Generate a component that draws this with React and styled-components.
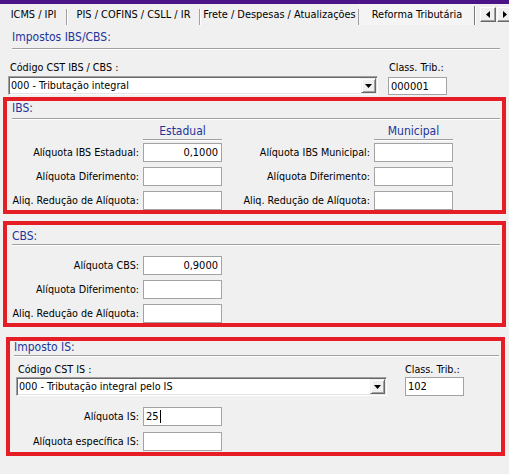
import React from "react";
import styled, { createGlobalStyle } from "styled-components";

const FONT = `"DejaVu Sans Condensed", "Liberation Sans", sans-serif`;
const BLUE = "#22349a";
const RED = "#e41e24";

const GlobalStyle = createGlobalStyle`
  html, body { margin: 0; padding: 0; background: #f0f0f0; }
  body { font-family: ${FONT}; font-size: 10.7px; color: #000; }
  * { box-sizing: border-box; }
`;

const Window = styled.div`
  width: 509px;
  height: 474px;
  overflow: hidden;
  display: flex;
  flex-direction: column;
  background: #f0f0f0;
  font-family: ${FONT};
  font-size: 10.7px;
  color: #000;
`;

const TitleStrip = styled.div`
  flex: none;
  height: 4px;
  background: #4b1487;
`;

const TabBar = styled.div`
  flex: none;
  height: 21px;
  display: flex;
  align-items: stretch;
`;

const Tab = styled.div`
  flex: none;
  width: ${(p) => p.$width}px;
  position: relative;
  display: flex;
  align-items: center;
  justify-content: center;
  font-size: 10.9px;
  white-space: nowrap;
  background: ${(p) => (p.$active ? "#f4f4f4" : "transparent")};
  &::after {
    content: "";
    position: absolute;
    right: 0;
    top: ${(p) => (p.$active ? 2 : 5)}px;
    bottom: 0;
    width: 1px;
    background: ${(p) => (p.$active ? "#7a7a7a" : "#a0a0a0")};
    box-shadow: 1px 0 0 #fff;
  }
`;

const TabScroller = styled.div`
  display: flex;
  gap: 1px;
  margin: 3px 0 0 5px;
  align-self: flex-start;
`;

const ScrollButton = styled.div`
  width: 16px;
  height: 15px;
  background: #f0f0f0;
  border-style: solid;
  border-width: 1px;
  border-color: #fff #696969 #696969 #fff;
  box-shadow: inset -1px -1px 0 #a0a0a0;
  display: flex;
  align-items: center;
  justify-content: center;
`;

const Page = styled.div`
  flex: 1;
  display: flex;
  flex-direction: column;
`;

const GroupTitle = styled.div`
  margin: ${(p) => p.$mt || 0}px ${(p) => p.$mr || 0}px 0 ${(p) => p.$ml || 0}px;
  padding-bottom: ${(p) => p.$pb || 0}px;
  line-height: ${(p) => p.$lh || 14}px;
  font-size: 12px;
  color: ${BLUE};
  border-bottom: 1px solid #a0a0a0;
  box-shadow: 0 1px 0 #fff;
  white-space: nowrap;
`;

const CstRow = styled.div`
  display: flex;
  align-items: flex-start;
  margin: ${(p) => p.$mt || 0}px 0 0 ${(p) => p.$ml || 0}px;
`;

const FieldStack = styled.div`
  display: flex;
  flex-direction: column;
  margin-left: ${(p) => p.$ml || 0}px;
`;

const FieldLabel = styled.div`
  line-height: 13px;
  padding-left: ${(p) => p.$pl ?? 2}px;
  white-space: nowrap;
  margin-bottom: ${(p) => p.$gap ?? 2}px;
`;

const ComboBox = styled.div`
  width: ${(p) => p.$width}px;
  height: ${(p) => p.$height || 19}px;
  display: flex;
  align-items: stretch;
  background: #fff;
  border-style: solid;
  border-width: 1px;
  border-color: #a0a0a0 #fff #fff #a0a0a0;
  box-shadow: inset 1px 1px 0 #696969, inset -1px -1px 0 #e3e3e3;
  padding: 1px;
`;

const ComboText = styled.div`
  flex: 1;
  display: flex;
  align-items: center;
  padding-left: 1px;
  white-space: nowrap;
  overflow: hidden;
`;

const ComboButton = styled.div`
  flex: none;
  width: 15px;
  background: #f0f0f0;
  border-style: solid;
  border-width: 1px;
  border-color: #f0f0f0 #696969 #696969 #f0f0f0;
  box-shadow: inset 1px 1px 0 #fff, inset -1px -1px 0 #a0a0a0;
  display: flex;
  align-items: center;
  justify-content: center;
`;

const TextBox = styled.div`
  width: ${(p) => p.$width || 79}px;
  height: ${(p) => p.$height || 19}px;
  background: #fff;
  border: 1px solid #a3a3a3;
  display: flex;
  align-items: center;
  justify-content: ${(p) => (p.$align === "right" ? "flex-end" : "flex-start")};
  padding: 0 3px 0 2px;
  white-space: nowrap;
  font-size: 11px;
`;

const Caret = styled.span`
  display: inline-block;
  width: 1px;
  height: 13px;
  background: #000;
  margin-left: 1px;
`;

const RedFrame = styled.div`
  margin: ${(p) => p.$mt || 0}px 0 0 ${(p) => p.$ml || 0}px;
  width: ${(p) => p.$width}px;
  border: 4px solid ${RED};
  padding-bottom: ${(p) => p.$pb || 0}px;
  display: flex;
  flex-direction: column;
`;

const FieldGrid = styled.div`
  display: grid;
  grid-template-columns: ${(p) => p.$columns};
  column-gap: 4px;
  row-gap: ${(p) => p.$rowGap || 5}px;
  grid-auto-rows: auto;
  margin-top: ${(p) => p.$mt || 0}px;
`;

const ColumnHead = styled.div`
  grid-column: ${(p) => p.$col};
  line-height: 14px;
  padding-bottom: 1px;
  font-size: 12px;
  color: ${BLUE};
  text-align: center;
  border-bottom: 1px solid #a0a0a0;
  box-shadow: 0 1px 0 #fff;
  margin-bottom: -2px;
  white-space: nowrap;
`;

const RowLabel = styled.div`
  grid-column: ${(p) => p.$col || "auto"};
  align-self: center;
  text-align: right;
  white-space: nowrap;
`;

const DownArrow = () => (
  <svg width="7" height="4" viewBox="0 0 7 4">
    <polygon points="0,0 7,0 3.5,4" fill="#000" />
  </svg>
);

const SideArrow = ({ dir }) => (
  <svg width="4" height="7" viewBox="0 0 4 7">
    {dir === "left" ? (
      <polygon points="4,0 4,7 0,3.5" fill="#000" />
    ) : (
      <polygon points="0,0 0,7 4,3.5" fill="#000" />
    )}
  </svg>
);

const Combo = ({ width, text }) => (
  <ComboBox $width={width}>
    <ComboText>{text}</ComboText>
    <ComboButton>
      <DownArrow />
    </ComboButton>
  </ComboBox>
);

export default function App() {
  return (
    <>
      <GlobalStyle />
      <Window>
        <TitleStrip />
        <TabBar>
          <Tab $width={67}>ICMS / IPI</Tab>
          <Tab $width={133}>PIS / COFINS / CSLL / IR</Tab>
          <Tab $width={159}>Frete / Despesas / Atualizações</Tab>
          <Tab $width={116} $active>
            Reforma Tributária
          </Tab>
          <TabScroller>
            <ScrollButton>
              <SideArrow dir="left" />
            </ScrollButton>
            <ScrollButton>
              <SideArrow dir="right" />
            </ScrollButton>
          </TabScroller>
        </TabBar>

        <Page>
          <GroupTitle $ml={12} $mr={9} $mt={5} $lh={15} $pb={3}>
            Impostos IBS/CBS:
          </GroupTitle>
          <CstRow $ml={8} $mt={12}>
            <FieldStack>
              <FieldLabel>Código CST IBS / CBS :</FieldLabel>
              <Combo width={370} text="000 - Tributação integral" />
            </FieldStack>
            <FieldStack $ml={10}>
              <FieldLabel $pl={1} $gap={3}>
                Class. Trib.:
              </FieldLabel>
              <TextBox $width={59} $height={18}>
                000001
              </TextBox>
            </FieldStack>
          </CstRow>

          <RedFrame $mt={2} $ml={3} $width={503}>
            <GroupTitle $ml={5} $mr={2} $lh={14} $pb={3}>
              IBS:
            </GroupTitle>
            <FieldGrid $mt={5} $columns="132px 79px 144px 79px">
              <ColumnHead $col={2}>Estadual</ColumnHead>
              <ColumnHead $col={4}>Municipal</ColumnHead>
              <RowLabel $col={1}>Alíquota IBS Estadual:</RowLabel>
              <TextBox $align="right">0,1000</TextBox>
              <RowLabel>Alíquota IBS Municipal:</RowLabel>
              <TextBox />
              <RowLabel>Alíquota Diferimento:</RowLabel>
              <TextBox />
              <RowLabel>Alíquota Diferimento:</RowLabel>
              <TextBox />
              <RowLabel>Aliq. Redução de Alíquota:</RowLabel>
              <TextBox />
              <RowLabel>Aliq. Redução de Alíquota:</RowLabel>
              <TextBox />
            </FieldGrid>
          </RedFrame>

          <RedFrame $mt={7} $ml={3} $width={503}>
            <GroupTitle $ml={5} $mr={2} $mt={4} $lh={14} $pb={1}>
              CBS:
            </GroupTitle>
            <FieldGrid $mt={11} $columns="132px 79px">
              <RowLabel>Alíquota CBS:</RowLabel>
              <TextBox $align="right">0,9000</TextBox>
              <RowLabel>Alíquota Diferimento:</RowLabel>
              <TextBox />
              <RowLabel>Aliq. Redução de Alíquota:</RowLabel>
              <TextBox />
            </FieldGrid>
          </RedFrame>

          <RedFrame $mt={10} $ml={6} $width={499} $pb={1}>
            <GroupTitle $ml={4} $mr={2} $lh={13} $pb={1}>
              Imposto IS:
            </GroupTitle>
            <CstRow $ml={6} $mt={7}>
              <FieldStack>
                <FieldLabel $gap={1}>Código CST IS :</FieldLabel>
                <Combo width={371} text="000 - Tributação integral pelo IS" />
              </FieldStack>
              <FieldStack $ml={18}>
                <FieldLabel $pl={0} $gap={1}>
                  Class. Trib.:
                </FieldLabel>
                <TextBox $width={59}>102</TextBox>
              </FieldStack>
            </CstRow>
            <FieldGrid $mt={11} $rowGap={6} $columns="129px 79px">
              <RowLabel>Alíquota IS:</RowLabel>
              <TextBox>
                25
                <Caret />
              </TextBox>
              <RowLabel>Alíquota específica IS:</RowLabel>
              <TextBox />
            </FieldGrid>
          </RedFrame>
        </Page>
      </Window>
    </>
  );
}
